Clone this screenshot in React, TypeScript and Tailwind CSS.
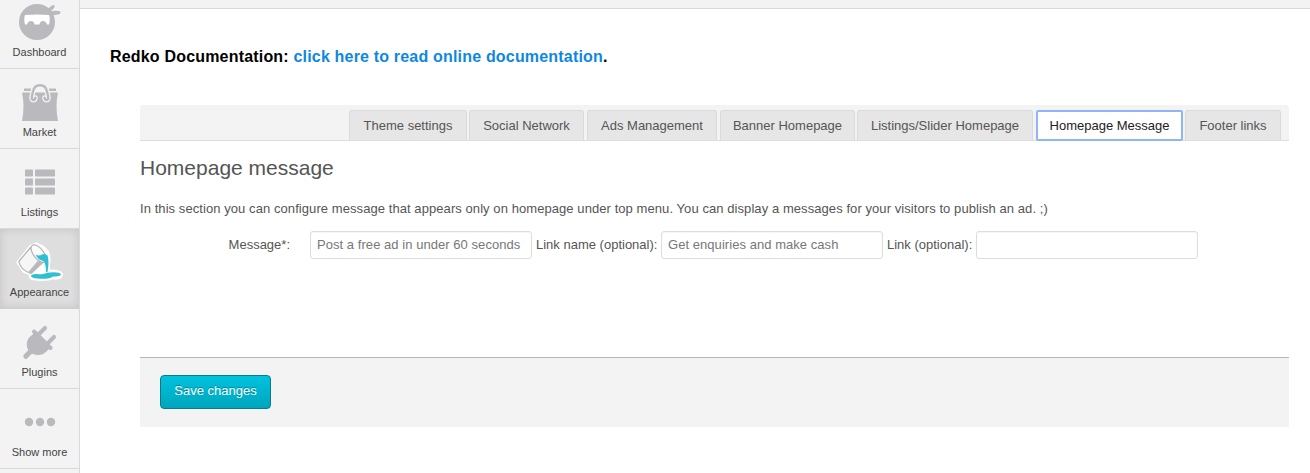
import React from "react";

const GREY = "#bab9bd";

function Ninja() {
  return (
    <svg width="46" height="45" viewBox="0 0 46 45">
      <g fill={GREY}>
        <circle cx="20" cy="22" r="18" />
        <path d="M29 10 L35 5.500 Q38 4 37.500 7.500 L33 12Z M33 12 Q38 10 43.500 11.500 L43 14 Q37 15.500 33 14.500Z" />
      </g>
      <path
        fill="#fff"
        d="M8 15 Q20 14 32 15 Q33.500 19 32 24.500 L30 24.500 Q29 21 26 21 Q23 21 22.500 24.500 L17.500 24.500 Q17 21 14 21 Q11 21 10 24.500 L8 24.500 Q6.500 19 8 15Z"
      />
    </svg>
  );
}

const HANDLE =
  "M14.300 14.800 Q14 17 12.200 17 Q10.300 16.800 10.800 13.500 L12.300 7.500 Q13.500 2.200 19 2.200 Q24.500 2.200 25.700 7.500 L27.200 13.500 Q27.700 16.800 25.800 17 Q24 17 23.700 14.800";

function Bag() {
  return (
    <svg width="38" height="40" viewBox="0 0 38 40">
      <path fill={GREY} d="M1 9.500 H37 Q34 23 37 38 H1 Q4 23 1 9.500Z M3 5.500 H10 V8 H3Z M28 5.500 H35 V8 H28Z" />
      <path fill="none" stroke="#f3f3f3" strokeWidth="5" strokeLinecap="round" d={HANDLE} />
      <path fill="none" stroke={GREY} strokeWidth="2.400" strokeLinecap="round" d={HANDLE} />
    </svg>
  );
}

function ListIcon() {
  return (
    <svg width="30" height="27" viewBox="0 0 30 27" fill={GREY}>
      {[0.5, 9.5, 18.5].map((y) => (
        <g key={y}>
          <rect x="0" y={y} width="8" height="7" rx="0.8" />
          <rect x="10" y={y} width="20" height="7" rx="0.8" />
        </g>
      ))}
    </svg>
  );
}

function Bucket() {
  return (
    <svg width="48" height="40" viewBox="0 0 48 40" className="overflow-visible">
      <path
        stroke="#fff"
        strokeWidth="4"
        strokeLinejoin="round"
        fill="#fff"
        d="M15 3.500 L20 1.500 Q26 3 31 9 L32.500 15 L31.500 28.500 Q45 28 45 32 Q44 35 36 34.500 Q30 37 16 35 Q13.500 33 15.500 31 L8 28 L2.500 19.500Z"
      />
      <path fill="#f6f6f7" stroke="#b4b4b8" strokeWidth="1.200" d="M14.500 4.500 L2.800 18.500 Q4.500 27 15 30.500 L28 18.500 Q19 14 14.500 4.500Z" />
      <path fill="#b9b9bd" d="M12.500 28.700 L23 16.500 L28 18.500 L15 30.500Z" />
      <ellipse cx="22.500" cy="10.500" rx="5" ry="10.300" transform="rotate(-38 22.500 10.500)" fill="#fbfbfb" stroke="#b4b4b8" strokeWidth="1.200" />
      <path fill="#2fbfd2" d="M19.500 11.500 Q23 13.500 26 11.500 Q29 10 31.500 12.500 Q33.500 19 31.500 29 L30 29 Q30 21 27.500 18 Q22 17 19.500 11.500Z" />
      <path fill="#2fbfd2" d="M15 33 Q16 30.500 23 31.300 Q29 31 31 29.700 Q44 28.500 45 31.500 Q44 33.500 37 33.500 Q34 36 25 35.800 Q16 35.800 15 33Z" />
    </svg>
  );
}

function Plug() {
  return (
    <svg width="36" height="36" viewBox="0 0 36 36">
      <g stroke={GREY} strokeLinecap="round" fill="none">
        <path strokeWidth="5" d="M3.800 31.300 L10 25" />
        <path strokeWidth="4.200" d="M16 10 L23 3 M25 19 L32 12" />
        <path strokeWidth="4" d="M12 6.500 L28.500 23" />
      </g>
      <path fill={GREY} d="M11 6 L28.500 23.500 Q26 24 24.500 26.500 Q20.500 30.500 15 30 Q10 29.500 7 26.500 Q4 22 5 17 Q6 12.500 10 10 Q12 9 11 6Z" />
    </svg>
  );
}

function Dots() {
  return (
    <svg width="32" height="12" viewBox="0 0 32 12" fill={GREY}>
      <circle cx="5" cy="5" r="4.200" />
      <circle cx="16" cy="5" r="4.200" />
      <circle cx="27" cy="5" r="4.200" />
    </svg>
  );
}

const nav = [
  { label: "Dashboard", icon: <Ninja /> },
  { label: "Market", icon: <Bag /> },
  { label: "Listings", icon: <ListIcon /> },
  { label: "Appearance", icon: <Bucket />, active: true },
  { label: "Plugins", icon: <Plug /> },
  { label: "Show more", icon: <Dots /> },
];

const tabs = [
  { label: "Theme settings", cls: "w-[118px] mr-[2px]" },
  { label: "Social Network", cls: "w-[115px] mr-[3px]" },
  { label: "Ads Management", cls: "w-[130px] mr-[3px]" },
  { label: "Banner Homepage", cls: "w-[135px] mr-[2px]" },
  { label: "Listings/Slider Homepage", cls: "w-[176px] mr-[3px]" },
  { label: "Homepage Message", cls: "w-[147px] mr-[2px]", active: true },
  { label: "Footer links", cls: "w-[96px]" },
];

const input =
  "h-7 w-[222px] rounded-[3px] border border-[#ddd] bg-white px-1.5 pb-0.5 text-[13px] tracking-[0.05px] text-[#666] shadow-[inset_0_1px_1px_rgba(0,0,0,0.04)] outline-none placeholder:text-[#777]";

export default function App() {
  return (
    <div className="flex h-[473px] w-[1310px] overflow-hidden bg-white font-['Liberation_Sans',Arial,sans-serif] text-[13px] text-[#555]">
      <nav className="flex w-20 shrink-0 flex-col overflow-hidden border-r border-[#d9d9d9] bg-[#f3f3f3]">
        <div className="-mt-[11px] flex flex-col">
          {nav.map((n) => (
            <a
              key={n.label}
              className={
                "flex h-20 flex-col items-center border-b text-[11px] leading-[14px] text-[#444] " +
                (n.active
                  ? "border-[#cfcfcf] bg-[#dedede] shadow-[inset_0_0_10px_rgba(0,0,0,0.12)]"
                  : "border-[#d9d9d9]")
              }
            >
              <span className="mt-[11px] flex h-[45px] items-center justify-center">{n.icon}</span>
              <span className="whitespace-nowrap">{n.label}</span>
            </a>
          ))}
          <div className="h-3" />
        </div>
      </nav>

      <main className="flex min-w-0 flex-1 flex-col">
        <div className="h-[9px] shrink-0 border-b border-[#d9d9d9] bg-[#f3f3f3]" />
        <h1 className="mt-[38px] ml-[30px] text-[16px] leading-5 font-bold tracking-[0.185px] whitespace-nowrap text-black">
          Redko Documentation: <a className="text-[#0d87e5]">click here to read online documentation</a>.
        </h1>

        <section className="mt-[38px] mr-[21px] ml-[60px] flex flex-col">
          <div className="flex h-9 items-end justify-end rounded-t-[3px] border-b border-[#ddd] bg-[#f3f3f3] pr-2">
            {tabs.map((t) => (
              <button
                key={t.label}
                className={
                  "flex shrink-0 items-center justify-center whitespace-nowrap " +
                  t.cls +
                  (t.active
                    ? " -mb-px h-[31px] rounded-[2px] border-2 border-[#8fb5f7] bg-white text-[#222]"
                    : " h-[30px] rounded-t-[3px] border border-b-0 border-[#dadada] bg-[#e6e6e6] text-[#555]")
                }
              >
                {t.label}
              </button>
            ))}
          </div>

          <h2 className="mt-[14px] text-[21px] leading-[26px]">Homepage message</h2>
          <p className="mt-5 leading-4 tracking-[0.072px] whitespace-nowrap">
            In this section you can configure message that appears only on homepage under top menu. You can display a
            messages for your visitors to publish an ad. ;)
          </p>

          <div className="mt-[14px] flex h-7 whitespace-nowrap">
            <label className="w-[150px] text-right leading-[27px]">Message*:</label>
            <input className={input + " ml-5"} placeholder="Post a free ad in under 60 seconds" />
            <label className="w-[129px] pl-1 leading-[27px]">Link name (optional):</label>
            <input className={input} placeholder="Get enquiries and make cash" />
            <label className="w-[93px] pl-1 leading-[27px]">Link (optional):</label>
            <input className={input} />
          </div>

          <div className="mt-[98px] h-[70px] border-t border-[#b5b5b5] bg-[#f3f3f3] pt-[17px] pl-5">
            <button className="h-[34px] w-[111px] rounded-[4px] border border-[#057d8b] bg-linear-to-b from-[#00c3de] to-[#00a5bd] pb-[3px] text-white [text-shadow:0_-1px_0_rgba(0,0,0,0.3)]">
              Save changes
            </button>
          </div>
        </section>
      </main>
    </div>
  );
}
